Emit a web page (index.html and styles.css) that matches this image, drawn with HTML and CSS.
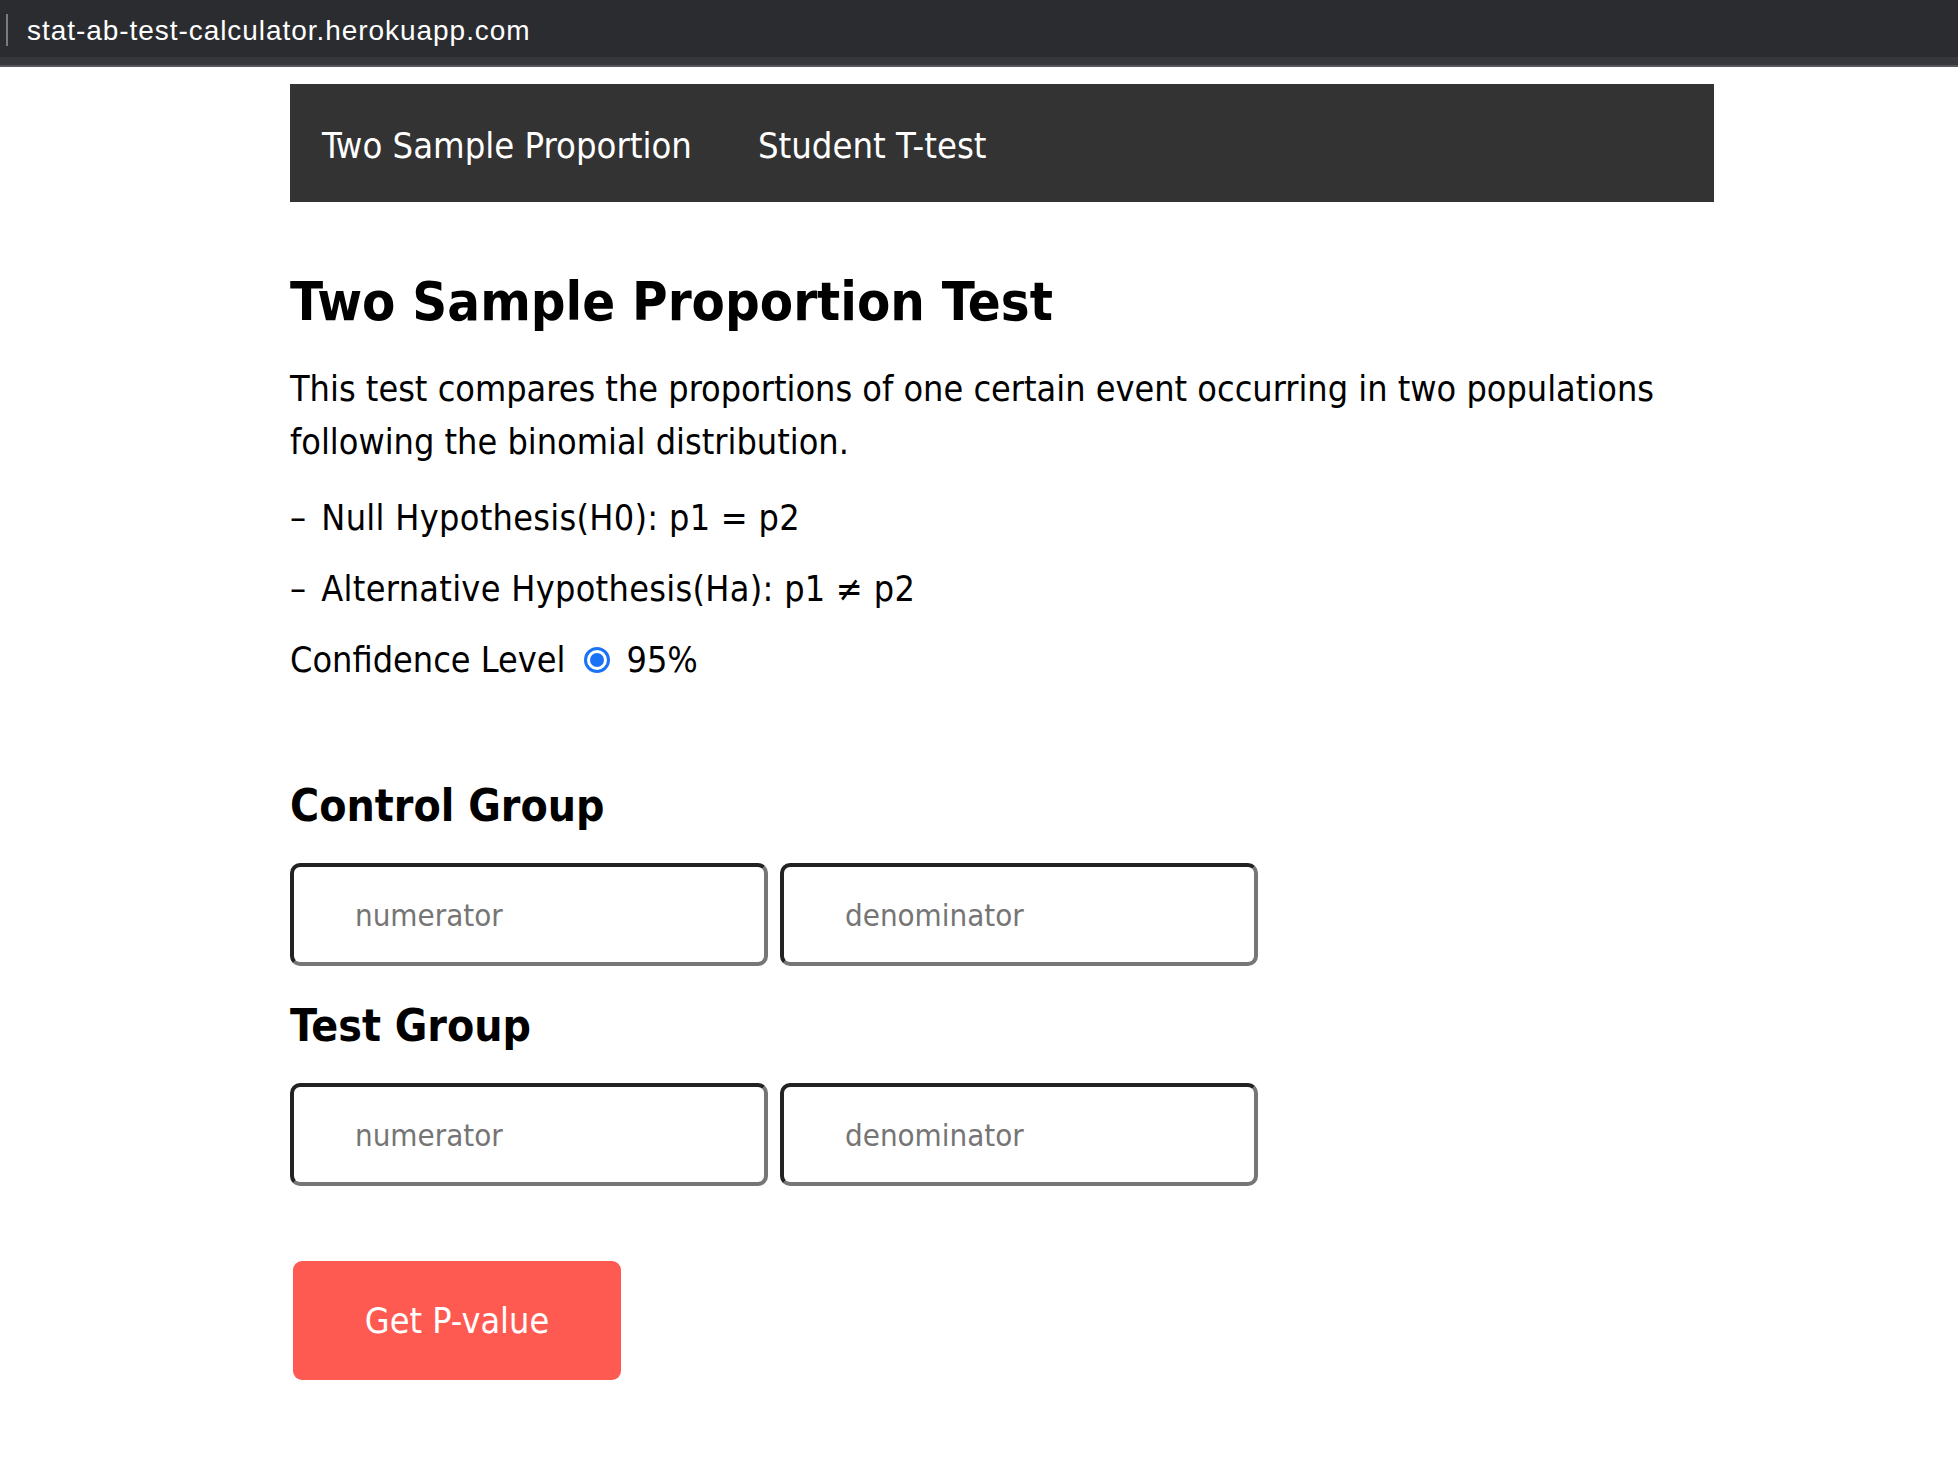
FILE: index.html
```html
<!DOCTYPE html>
<html lang="en">
<head>
<meta charset="utf-8">
<title>AB Test Calculator</title>
<link rel="stylesheet" href="styles.css">
</head>
<body>
<div class="urlbar">
  <span class="caret"></span>
  <span class="url">stat-ab-test-calculator.herokuapp.com</span>
</div>
<div class="page">
  <nav class="nav">
    <a class="nav-link" href="#">Two Sample Proportion</a>
    <a class="nav-link" href="#">Student T-test</a>
  </nav>
  <main class="content">
    <h1 class="title">Two Sample Proportion Test</h1>
    <p class="desc">This test compares the proportions of one certain event occurring in two populations following the binomial distribution.</p>
    <p class="line hyp"><span class="dash">–</span>Null Hypothesis(H0): p1 = p2</p>
    <p class="line hyp"><span class="dash">–</span>Alternative Hypothesis(Ha): p1 ≠ p2</p>
    <p class="line conf">Confidence Level <span class="radio"><span class="radio-dot"></span></span> 95%</p>

    <h2 class="group">Control Group</h2>
    <div class="inputs">
      <input class="field" type="text" placeholder="numerator">
      <input class="field" type="text" placeholder="denominator">
    </div>

    <h2 class="group">Test Group</h2>
    <div class="inputs">
      <input class="field" type="text" placeholder="numerator">
      <input class="field" type="text" placeholder="denominator">
    </div>

    <button class="submit" type="button">Get P-value</button>
  </main>
</div>
</body>
</html>
```

FILE: styles.css
```css
html, body {
  margin: 0;
  padding: 0;
  background: #ffffff;
}

body {
  font-family: "DejaVu Sans Condensed", "DejaVu Sans", sans-serif;
  font-stretch: condensed;
  color: #000;
}

.urlbar {
  height: 57px;
  background: #2b2c30;
  border-bottom: 8px solid #37383c;
  box-shadow: 0 2px 0 #56575b;
  display: flex;
  align-items: center;
  padding-left: 6px;
  margin-bottom: 2px;
}

.caret {
  width: 2px;
  height: 32px;
  background: #7b7b7e;
  margin-right: 19px;
  margin-top: 2px;
}

.url {
  font-family: "Liberation Sans", Arial, sans-serif;
  font-stretch: normal;
  font-size: 28px;
  letter-spacing: 0.95px;
  color: #ffffff;
  padding-top: 4px;
}

.page {
  margin-left: 290px;
  width: 1424px;
  padding-top: 17px;
}

.nav {
  height: 118px;
  box-sizing: border-box;
  padding: 5px 0 0 32px;
  background: #333333;
  display: flex;
  align-items: center;
  gap: 66px;
}

.nav-link {
  color: #ffffff;
  text-decoration: none;
  font-size: 36.1px;
}

.content {
  padding-top: 65px;
}

.title {
  margin: 0 0 25px 0;
  font-size: 54px;
  line-height: 70px;
  font-weight: bold;
}

.desc {
  margin: 0 0 24px 0;
  font-size: 35.7px;
  line-height: 53px;
}

.line {
  margin: 0 0 19px 0;
  font-size: 35.7px;
  line-height: 52px;
}

.hyp {
  letter-spacing: 0.3px;
}

.dash {
  margin-right: 15px;
}

.conf {
  display: flex;
  align-items: center;
  margin-bottom: 90px;
}

.radio {
  width: 26px;
  height: 26px;
  box-sizing: border-box;
  border: 3px solid #1a73f5;
  border-radius: 50%;
  display: inline-flex;
  align-items: center;
  justify-content: center;
  margin: 0 16px 0 19px;
}

.radio-dot {
  width: 14px;
  height: 14px;
  border-radius: 50%;
  background: #1a73f5;
}

.group {
  margin: 0 0 27px 0;
  font-size: 44.2px;
  line-height: 60px;
  font-weight: bold;
}

.inputs {
  display: flex;
  gap: 12px;
  margin-bottom: 30px;
}

.field {
  width: 478px;
  height: 103px;
  box-sizing: border-box;
  border-width: 4px;
  border-style: solid;
  border-color: #222222 #767676 #767676 #222222;
  border-radius: 10px;
  padding: 0 0 0 61px;
  font-family: "DejaVu Sans Condensed", "DejaVu Sans", sans-serif;
  font-stretch: condensed;
  font-size: 31px;
  color: #000;
  background: #fff;
  outline: none;
}

.field::placeholder {
  color: #757575;
}

.submit {
  display: block;
  margin: 75px 0 0 3px;
  width: 328px;
  height: 119px;
  border: none;
  border-radius: 9px;
  background: #ff5a51;
  color: #ffffff;
  font-family: "DejaVu Sans Condensed", "DejaVu Sans", sans-serif;
  font-stretch: condensed;
  font-size: 35.7px;
  cursor: pointer;
}
```
